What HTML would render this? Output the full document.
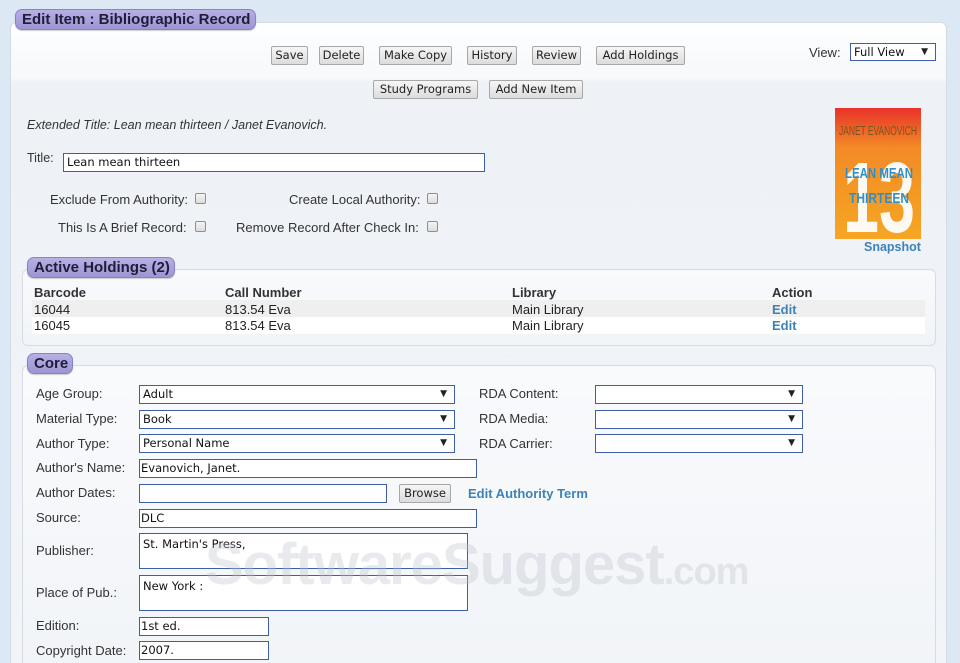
<!DOCTYPE html>
<html style="width:960px;height:663px;overflow:hidden"><head><meta charset="utf-8"><style>
*{box-sizing:border-box;margin:0;padding:0}
body{width:960px;height:663px;overflow:hidden;background:#dce8f3;font-family:"Liberation Sans",Arial,sans-serif;font-size:13px;color:#333;position:relative}
.a{position:absolute}
.panel{left:10px;top:22px;width:937px;height:660px;border:1px solid #d3dbe4;border-radius:6px;background:linear-gradient(#fff 0,#f7f9fb 40px,#f7f9fb 55px,#eef2f6 60px,#f1f4f8 100%)}
.hd{background:linear-gradient(#b6b0e4,#9d95d2);border:1px solid #8a82c4;border-radius:7px;font-weight:bold;font-size:15px;color:#1e1e3a;padding:0 6px;height:21px;line-height:20px;box-shadow:0 1px 1px rgba(0,0,0,.2);white-space:nowrap}
.btn{height:19px;border:1px solid #a8a8a8;background:linear-gradient(#f6f6f6,#dcdcdc);font-family:"DejaVu Sans",Verdana,sans-serif;font-size:11.5px;color:#222;line-height:17px;text-align:center;border-radius:2px}
.box{border:1px solid #d6dce3;border-radius:6px;background:linear-gradient(#f9fafc,#f1f4f8)}
.in{background:#fff;border:1px solid #3e5fa8;height:19px;font-family:"DejaVu Sans",Verdana,sans-serif;font-size:11.5px;color:#111;line-height:17px;padding-left:3px}
.sel::after{content:"▼";position:absolute;right:7px;top:0;font-size:9px;color:#222}
.lb{font-size:13px;color:#333}
.cb{width:11px;height:11px;border:1px solid #8f8f8f;border-radius:2px;background:linear-gradient(#f4f4f4,#ddd)}
.ta{height:36px;line-height:16px;padding-top:2px}
.lnk{color:#3d82b8;font-weight:bold}
</style></head><body>
<div class="a panel"></div>
<div class="a hd" style="left:15px;top:9px;width:241px">Edit Item : Bibliographic Record</div>

<div class="a btn" style="left:271px;top:46px;width:37px">Save</div>
<div class="a btn" style="left:319px;top:46px;width:45px">Delete</div>
<div class="a btn" style="left:379px;top:46px;width:73px">Make Copy</div>
<div class="a btn" style="left:467px;top:46px;width:50px">History</div>
<div class="a btn" style="left:532px;top:46px;width:49px">Review</div>
<div class="a btn" style="left:596px;top:46px;width:89px">Add Holdings</div>
<div class="a btn" style="left:373px;top:80px;width:105px">Study Programs</div>
<div class="a btn" style="left:489px;top:80px;width:94px">Add New Item</div>
<div class="a lb" style="left:809px;top:45px">View:</div>
<div class="a in sel" style="left:850px;top:43px;width:86px;height:18px">Full View</div>

<div class="a" style="left:27px;top:118px;font-style:italic;font-size:12.5px;color:#333">Extended Title: Lean mean thirteen / Janet Evanovich.</div>
<div class="a lb" style="left:27px;top:151px;font-size:12.5px">Title:</div>
<div class="a in" style="left:63px;top:153px;width:422px">Lean mean thirteen</div>
<div class="a lb" style="left:50px;top:192px">Exclude From Authority:</div><div class="a cb" style="left:195px;top:193px"></div>
<div class="a lb" style="left:289px;top:192px">Create Local Authority:</div><div class="a cb" style="left:427px;top:193px"></div>
<div class="a lb" style="left:58px;top:220px">This Is A Brief Record:</div><div class="a cb" style="left:195px;top:221px"></div>
<div class="a lb" style="left:236px;top:220px">Remove Record After Check In:</div><div class="a cb" style="left:427px;top:221px"></div>

<svg class="a" style="left:835px;top:108px" width="86" height="131" viewBox="0 0 86 131">
<defs><linearGradient id="g" x1="0" y1="0" x2="0" y2="1"><stop offset="0" stop-color="#e8322a"/><stop offset=".3" stop-color="#f38a26"/><stop offset="1" stop-color="#f5a623"/></linearGradient></defs>
<rect width="86" height="131" fill="url(#g)"/>
<text x="4" y="27" font-family="Liberation Sans" font-size="13" fill="#7a5520" textLength="78" lengthAdjust="spacingAndGlyphs">JANET EVANOVICH</text>
<text x="8" y="124" font-family="Liberation Sans" font-weight="bold" font-size="100" fill="#fff" textLength="72" lengthAdjust="spacingAndGlyphs" opacity=".95">13</text>
<text x="10" y="70" font-family="Liberation Sans" font-weight="bold" font-size="15" fill="#2e8fc9" textLength="68" lengthAdjust="spacingAndGlyphs">LEAN MEAN</text>
<text x="14" y="95" font-family="Liberation Sans" font-weight="bold" font-size="15" fill="#2e8fc9" textLength="60" lengthAdjust="spacingAndGlyphs">THIRTEEN</text>
</svg>
<div class="a lnk" style="left:864px;top:240px;font-size:12.5px">Snapshot</div>

<div class="a box" style="left:22px;top:269px;width:914px;height:77px"></div>
<div class="a hd" style="left:27px;top:257px;width:148px">Active Holdings (2)</div>
<div class="a" style="left:32px;top:300px;width:893px;height:17px;background:#efefef"></div>
<div class="a" style="left:32px;top:317px;width:893px;height:17px;background:#fff"></div>
<div class="a" style="left:34px;top:285px;font-weight:bold;color:#333">Barcode</div>
<div class="a" style="left:225px;top:285px;font-weight:bold;color:#333">Call Number</div>
<div class="a" style="left:512px;top:285px;font-weight:bold;color:#333">Library</div>
<div class="a" style="left:772px;top:285px;font-weight:bold;color:#333">Action</div>
<div class="a" style="left:34px;top:302px;color:#222">16044</div>
<div class="a" style="left:225px;top:302px;color:#222">813.54 Eva</div>
<div class="a" style="left:512px;top:302px;color:#222">Main Library</div>
<div class="a lnk" style="left:772px;top:302px">Edit</div>
<div class="a" style="left:34px;top:318px;color:#222">16045</div>
<div class="a" style="left:225px;top:318px;color:#222">813.54 Eva</div>
<div class="a" style="left:512px;top:318px;color:#222">Main Library</div>
<div class="a lnk" style="left:772px;top:318px">Edit</div>

<div class="a box" style="left:22px;top:365px;width:914px;height:310px"></div>
<div class="a hd" style="left:27px;top:353px;width:46px">Core</div>

<div class="a lb" style="left:36px;top:386px">Age Group:</div><div class="a in sel" style="left:139px;top:385px;width:316px">Adult</div>
<div class="a lb" style="left:36px;top:411px">Material Type:</div><div class="a in sel" style="left:139px;top:410px;width:316px">Book</div>
<div class="a lb" style="left:36px;top:436px">Author Type:</div><div class="a in sel" style="left:139px;top:434px;width:316px">Personal Name</div>
<div class="a lb" style="left:479px;top:386px">RDA Content:</div><div class="a in sel" style="left:595px;top:385px;width:208px"></div>
<div class="a lb" style="left:479px;top:411px">RDA Media:</div><div class="a in sel" style="left:595px;top:410px;width:208px"></div>
<div class="a lb" style="left:479px;top:436px">RDA Carrier:</div><div class="a in sel" style="left:595px;top:434px;width:208px"></div>
<div class="a lb" style="left:36px;top:460px">Author's Name:</div><div class="a in" style="left:139px;top:459px;width:338px;padding-left:1px">Evanovich, Janet.</div>
<div class="a lb" style="left:36px;top:485px">Author Dates:</div><div class="a in" style="left:139px;top:484px;width:248px"></div>
<div class="a btn" style="left:399px;top:484px;width:52px">Browse</div>
<div class="a lnk" style="left:468px;top:486px">Edit Authority Term</div>
<div class="a lb" style="left:36px;top:510px">Source:</div><div class="a in" style="left:139px;top:509px;width:338px;padding-left:1px">DLC</div>
<div class="a lb" style="left:36px;top:543px">Publisher:</div><div class="a in ta" style="left:139px;top:533px;width:329px">St. Martin's Press,</div>
<div class="a lb" style="left:36px;top:585px">Place of Pub.:</div><div class="a in ta" style="left:139px;top:575px;width:329px">New York :</div>
<div class="a lb" style="left:36px;top:618px">Edition:</div><div class="a in" style="left:139px;top:617px;width:130px;padding-left:1px">1st ed.</div>
<div class="a lb" style="left:36px;top:643px">Copyright Date:</div><div class="a in" style="left:139px;top:641px;width:130px;padding-left:1px">2007.</div>

<div class="a" style="left:205px;top:530px;font-family:'Liberation Sans';font-weight:bold;font-size:58px;line-height:70px;color:rgba(190,196,204,.35);letter-spacing:-1px;white-space:nowrap">SoftwareSuggest<span style="font-size:38px">.com</span></div>
</body></html>
